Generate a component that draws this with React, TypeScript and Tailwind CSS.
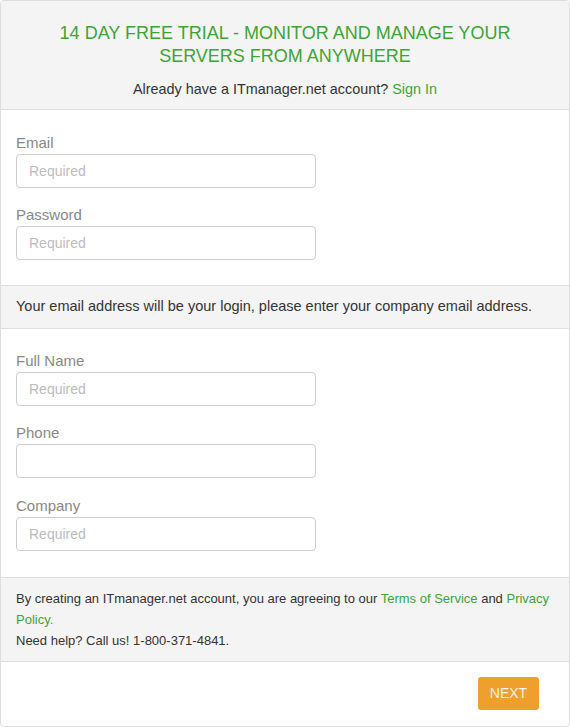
import React from 'react';

const green = 'text-[#3da535]';

function Field({ label, placeholder }: { label: string; placeholder?: string }) {
  return (
    <div className="flex flex-col">
      <label className="text-[15px] leading-[21px] text-[#888888]">{label}</label>
      <input
        type="text"
        placeholder={placeholder}
        className="mt-px h-[34px] w-[300px] rounded-[4px] border border-[#cccccc] bg-white px-3 text-[14px] text-[#333333] outline-none placeholder:text-[#bbbbbb]"
      />
    </div>
  );
}

export default function App() {
  return (
    <div className="h-[727px] w-[570px] bg-white font-['Liberation_Sans',Arial,sans-serif]">
      <div className="flex h-full flex-col overflow-hidden rounded-[4px] border border-[#dddddd]">
        {/* Header */}
        <div className="flex h-[109px] flex-col items-center border-b border-[#dddddd] bg-[#f4f4f4] pt-[21px] text-center">
          <h1 className={`w-[480px] text-[18px] leading-[23px] ${green}`}>
            14 DAY FREE TRIAL - MONITOR AND MANAGE YOUR SERVERS FROM ANYWHERE
          </h1>
          <p className="mt-[11px] text-[14.4px] leading-[20px] text-[#333333]">
            Already have a ITmanager.net account? <a href="#" className={green}>Sign In</a>
          </p>
        </div>

        {/* Login fields */}
        <div className="flex flex-col gap-[16px] border-b border-[#dddddd] px-[15px] pb-[25px] pt-[22px]">
          <Field label="Email" placeholder="Required" />
          <Field label="Password" placeholder="Required" />
        </div>

        <div className="flex h-[43px] items-center border-b border-[#dddddd] bg-[#f4f4f4] px-[15px] text-[14.5px] text-[#333333]">
          Your email address will be your login, please enter your company email address.
        </div>

        {/* Contact fields */}
        <div className="flex flex-col gap-[16px] border-b border-[#dddddd] px-[15px] pb-[26px] pt-[21px]">
          <Field label="Full Name" placeholder="Required" />
          <Field label="Phone" />
          <div className="mt-px">
            <Field label="Company" placeholder="Required" />
          </div>
        </div>

        {/* Terms */}
        <div className="border-b border-[#dddddd] bg-[#f4f4f4] px-[15px] py-[10px] text-[13px] leading-[21px] text-[#333333]">
          <p>
            By creating an ITmanager.net account, you are agreeing to our{' '}
            <a href="#" className={green}>Terms of Service</a> and{' '}
            <a href="#" className={green}>Privacy Policy.</a>
          </p>
          <p>Need help? Call us! 1-800-371-4841.</p>
        </div>

        {/* Actions */}
        <div className="flex flex-1 items-start justify-end pr-[30px] pt-[15px]">
          <button className="h-[33px] w-[61px] rounded-[3px] bg-[#efa02c] text-[14px] text-[#fbf3e3]">
            NEXT
          </button>
        </div>
      </div>
    </div>
  );
}
